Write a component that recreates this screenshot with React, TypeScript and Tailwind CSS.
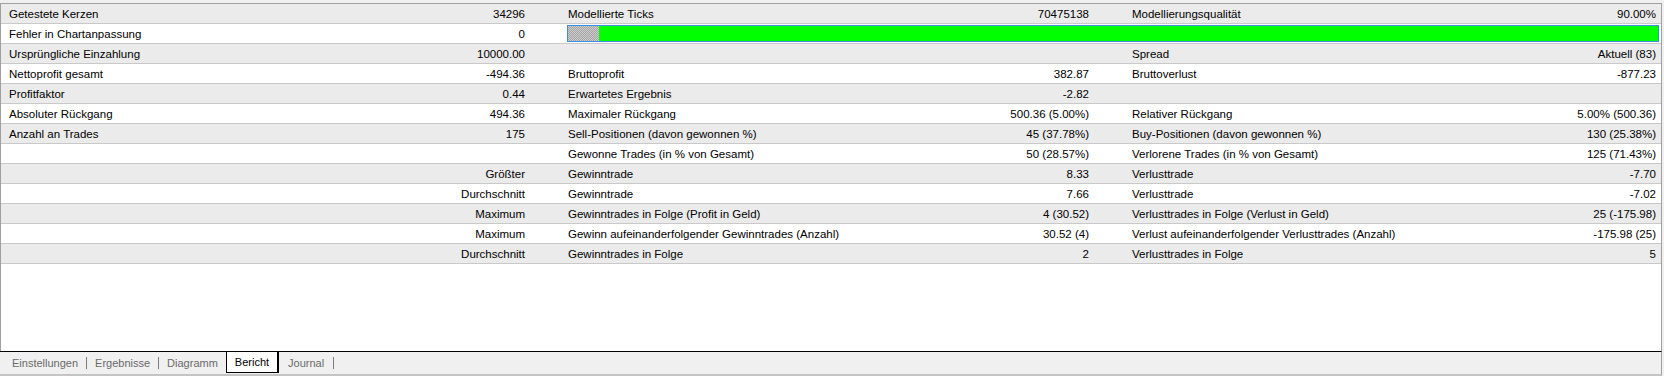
import React from "react";

type Row = {
  l1?: string;
  v1?: string;
  l2?: string;
  v2?: string;
  l3?: string;
  v3?: string;
  bar?: boolean;
};

const rows: Row[] = [
  { l1: "Getestete Kerzen", v1: "34296", l2: "Modellierte Ticks", v2: "70475138", l3: "Modellierungsqualität", v3: "90.00%" },
  { l1: "Fehler in Chartanpassung", v1: "0", bar: true },
  { l1: "Ursprüngliche Einzahlung", v1: "10000.00", l3: "Spread", v3: "Aktuell (83)" },
  { l1: "Nettoprofit gesamt", v1: "-494.36", l2: "Bruttoprofit", v2: "382.87", l3: "Bruttoverlust", v3: "-877.23" },
  { l1: "Profitfaktor", v1: "0.44", l2: "Erwartetes Ergebnis", v2: "-2.82" },
  { l1: "Absoluter Rückgang", v1: "494.36", l2: "Maximaler Rückgang", v2: "500.36 (5.00%)", l3: "Relativer Rückgang", v3: "5.00% (500.36)" },
  { l1: "Anzahl an Trades", v1: "175", l2: "Sell-Positionen (davon gewonnen %)", v2: "45 (37.78%)", l3: "Buy-Positionen (davon gewonnen %)", v3: "130 (25.38%)" },
  { l2: "Gewonne Trades (in % von Gesamt)", v2: "50 (28.57%)", l3: "Verlorene Trades (in % von Gesamt)", v3: "125 (71.43%)" },
  { v1: "Größter", l2: "Gewinntrade", v2: "8.33", l3: "Verlusttrade", v3: "-7.70" },
  { v1: "Durchschnitt", l2: "Gewinntrade", v2: "7.66", l3: "Verlusttrade", v3: "-7.02" },
  { v1: "Maximum", l2: "Gewinntrades in Folge (Profit in Geld)", v2: "4 (30.52)", l3: "Verlusttrades in Folge (Verlust in Geld)", v3: "25 (-175.98)" },
  { v1: "Maximum", l2: "Gewinn aufeinanderfolgender Gewinntrades (Anzahl)", v2: "30.52 (4)", l3: "Verlust aufeinanderfolgender Verlusttrades (Anzahl)", v3: "-175.98 (25)" },
  { v1: "Durchschnitt", l2: "Gewinntrades in Folge", v2: "2", l3: "Verlusttrades in Folge", v3: "5" },
];

function ReportRow({ row, gray }: { row: Row; gray: boolean }) {
  return (
    <div
      className={`flex h-[20px] border-b border-[#c9c9c9] ${gray ? "bg-[#ebebeb]" : "bg-white"}`}
    >
      <div className="w-[529px] flex items-center pt-[2px] pl-[8px] pr-[5px]">
        <span className="flex-1 whitespace-nowrap">{row.l1 ?? ""}</span>
        <span className="whitespace-nowrap">{row.v1 ?? ""}</span>
      </div>
      {row.bar ? (
        <div className="flex-1 flex items-center pl-[37px] pr-[2px]">
          <div className="flex-1 h-[17px] border border-[#3c8fe6] flex">
            <div className="w-[31px] h-full bg-[image:repeating-conic-gradient(#a3a3a3_0_25%,#cdcdcd_0_50%)] bg-[size:2px_2px]" />
            <div className="flex-1 h-full bg-[#00ff00]" />
          </div>
        </div>
      ) : (
        <>
          <div className="w-[564px] flex items-center pt-[2px] pl-[38px] pr-[5px]">
            <span className="flex-1 whitespace-nowrap">{row.l2 ?? ""}</span>
            <span className="whitespace-nowrap">{row.v2 ?? ""}</span>
          </div>
          <div className="flex-1 flex items-center pt-[2px] pl-[38px] pr-[5px]">
            <span className="flex-1 whitespace-nowrap">{row.l3 ?? ""}</span>
            <span className="whitespace-nowrap">{row.v3 ?? ""}</span>
          </div>
        </>
      )}
    </div>
  );
}

function Sep() {
  return <div className="w-[1px] h-[12px] bg-[#7d7d7d]" />;
}

export default function App() {
  return (
    <div className="w-[1664px] h-[376px] bg-[#f0f0f0] flex flex-col font-['Liberation_Sans',Arial,sans-serif] text-[11.5px] text-black leading-none">
      <div className="h-[3px] shrink-0" />
      <div className="w-[1662px] flex-1 bg-white border-l border-t border-r border-[#a0a0a0] flex flex-col">
        {rows.map((r, i) => (
          <ReportRow key={i} row={r} gray={i % 2 === 0} />
        ))}
      </div>
      <div className="w-[1662px] h-[25px] shrink-0 border-t border-black border-r border-r-[#a0a0a0] border-b-2 border-b-[#c4c4c4] flex items-start pl-[4px] text-[11px]">
        <div className="h-[21px] flex items-center pt-[1px] px-[8px] text-[#6a6a6a]">Einstellungen</div>
        <div className="h-[21px] flex items-center"><Sep /></div>
        <div className="h-[21px] flex items-center pt-[1px] px-[8px] text-[#6a6a6a]">Ergebnisse</div>
        <div className="h-[21px] flex items-center"><Sep /></div>
        <div className="h-[21px] flex items-center pt-[1px] px-[8px] text-[#6a6a6a]">Diagramm</div>
        <div className="h-[21px] flex items-center pt-[1px] px-[8px] bg-white border-l border-r-2 border-b border-black text-black">Bericht</div>
        <div className="h-[21px] flex items-center pt-[1px] pl-[9px] pr-[9px] text-[#6a6a6a]">Journal</div>
        <div className="h-[21px] flex items-center"><Sep /></div>
      </div>
    </div>
  );
}
